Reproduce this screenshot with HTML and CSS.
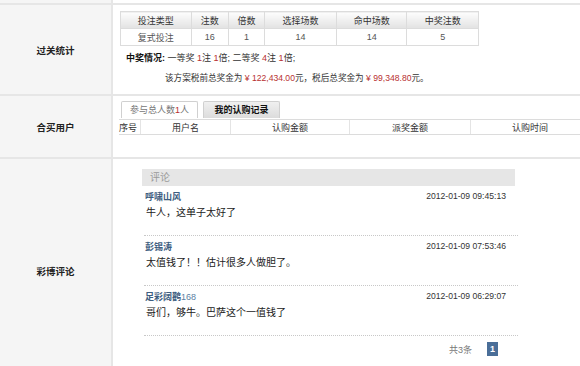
FILE: index.html
```html
<!DOCTYPE html>
<html lang="zh-CN">
  <head>
    <meta charset="UTF-8" />
    <meta name="viewport" content="width=device-width, initial-scale=1.0" />
    <title>方案详情</title>
    <link rel="stylesheet" href="styles.css">
  </head>
  <body>
    <div class="detail">
      <div class="row row-top">
        <div class="label"></div>
        <div class="content"></div>
      </div>

      <div class="row row-stats">
        <div class="label">过关统计</div>
        <div class="content">
          <table class="stats">
            <tr>
              <th class="c-type">投注类型</th>
              <th class="c-num">注数</th>
              <th class="c-mul">倍数</th>
              <th class="c-sel">选择场数</th>
              <th class="c-hit">命中场数</th>
              <th class="c-win">中奖注数</th>
            </tr>
            <tr>
              <td>复式投注</td>
              <td>16</td>
              <td>1</td>
              <td>14</td>
              <td class="red">14</td>
              <td class="red">5</td>
            </tr>
          </table>
          <p class="prize-info">
            <b>中奖情况:</b> 一等奖 <span class="red">1</span>注 <span class="red">1</span>倍; 二等奖 <span class="red">4</span>注 <span class="red">1</span>倍;
          </p>
          <p class="prize-total">
            该方案税前总奖金为 <span class="money">¥ 122,434.00</span>元，税后总奖金为 <span class="money">¥ 99,348.80</span>元。
          </p>
        </div>
      </div>

      <div class="row row-users">
        <div class="label">合买用户</div>
        <div class="content">
          <div class="tabs">
            <span class="tab">参与总人数<span class="red">1</span>人</span>
            <span class="tab active">我的认购记录</span>
          </div>
          <table class="buyers">
            <tr>
              <th class="b-no">序号</th>
              <th class="b-user">用户名</th>
              <th class="b-amount">认购金额</th>
              <th class="b-prize">派奖金额</th>
              <th class="b-time">认购时间</th>
            </tr>
          </table>
        </div>
      </div>

      <div class="row row-comments">
        <div class="label">彩博评论</div>
        <div class="content">
          <div class="comments">
            <div class="comments-head">评论</div>
            <ul class="comment-list">
              <li class="comment">
                <div class="comment-meta">
                  <span class="author">呼啸山风</span>
                  <span class="time">2012-01-09 09:45:13</span>
                </div>
                <p class="comment-text">牛人，这单子太好了</p>
              </li>
              <li class="comment">
                <div class="comment-meta">
                  <span class="author">彭锡涛</span>
                  <span class="time">2012-01-09 07:53:46</span>
                </div>
                <p class="comment-text">太值钱了！！估计很多人做胆了。</p>
              </li>
              <li class="comment">
                <div class="comment-meta">
                  <span class="author">足彩阔鹳<span class="digits">168</span></span>
                  <span class="time">2012-01-09 06:29:07</span>
                </div>
                <p class="comment-text">哥们，够牛。巴萨这个一值钱了</p>
              </li>
            </ul>
            <div class="pager">
              <span class="total">共3条</span>
              <span class="page current">1</span>
            </div>
          </div>
        </div>
      </div>
    </div>
  </body>
</html>
```

FILE: styles.css
```css
body {
  margin: 0;
  font-family: "Liberation Sans", "Noto Sans CJK SC", sans-serif;
  font-size: 9px;
  color: #333;
  background-color: #fff;
  height: 366px;
  overflow: hidden;
}

p {
  margin: 0;
}

.red {
  color: #b83030;
}

.row {
  display: grid;
  grid-template-columns: 113px 1fr;
  border-bottom: 2px solid #e6e6e6;
}

.label {
  background-color: #f5f5f5;
  border-right: 2px solid #e6e6e6;
  display: flex;
  align-items: center;
  justify-content: center;
  font-weight: 700;
  font-size: 9.5px;
  color: #222;
}

.row-top {
  height: 3px;
}

.row-stats {
  height: 89px;
}

.row-users {
  height: 61px;
}

.row-comments {
  height: 207px;
  border-bottom: none;
  overflow: hidden;
}

/* 过关统计 */
.row-stats .content {
  padding: 6px 0 0 7px;
}

.stats {
  border-collapse: collapse;
  width: 359px;
  border: 1px solid #d4d4d4;
  text-align: center;
}

.stats th,
.stats td {
  height: 16px;
  padding: 0;
  border: 1px solid #dcdcdc;
  font-weight: 400;
}

.stats th {
  background: linear-gradient(#fdfdfd, #e2e2e2);
  color: #333;
}

.stats td {
  background-color: #fff;
  color: #555;
}

.c-type { width: 71px; }
.c-num { width: 37px; }
.c-mul { width: 36px; }
.c-sel { width: 72px; }
.c-hit { width: 71px; }
.c-win { width: 72px; }

.prize-info {
  margin-top: 5px;
  padding-left: 6px;
  line-height: 14px;
  color: #333;
}

.prize-info b {
  color: #111;
}

.prize-total {
  margin-top: 6px;
  padding-left: 45px;
  line-height: 14px;
  font-size: 8.6px;
  color: #333;
}

.money {
  color: #b83030;
}

/* 合买用户 */
.row-users .content {
  padding: 5px 0 0 6px;
  overflow: hidden;
}

.tabs {
  display: flex;
  gap: 5px;
  padding-left: 2px;
  height: 18px;
}

.tab {
  width: 75px;
  height: 16px;
  line-height: 16px;
  text-align: center;
  border: 1px solid #d0d0d0;
  border-bottom: none;
  border-radius: 2px 2px 0 0;
  color: #777;
  background-color: #fff;
}

.tab.active {
  background: linear-gradient(#f0f0f0, #dcdcdc);
  color: #111;
  font-weight: 700;
}

.buyers {
  border-collapse: collapse;
  width: 470px;
}

.buyers th {
  height: 14px;
  padding: 0;
  font-weight: 400;
  color: #333;
  border-top: 1px solid #dcdcdc;
  border-bottom: 1px solid #dcdcdc;
  border-left: 1px solid #e4e4e4;
  text-align: center;
}

.buyers th:first-child {
  border-left: none;
  text-align: left;
}

.b-no { width: 21px; }
.b-user { width: 90px; }
.b-amount { width: 119px; }
.b-prize { width: 121px; }
.b-time { width: 119px; }

/* 彩博评论 */
.row-comments .label {
  align-items: flex-start;
  padding-top: 105px;
}

.row-comments .content {
  padding: 10px 0 0 29px;
}

.comments {
  width: 376px;
}

.comments-head {
  width: 365px;
  height: 17px;
  line-height: 17px;
  padding-left: 8px;
  background-color: #e6e6e6;
  color: #9a9a9a;
  font-size: 10px;
}

.comment-list {
  list-style: none;
  margin: 0 0 0 2px;
  padding: 0;
}

.comment {
  height: 46px;
  padding-top: 3px;
  border-bottom: 1px dotted #c8c8c8;
}

.comment-meta {
  display: flex;
  justify-content: space-between;
  align-items: center;
  height: 14px;
  padding: 0 12px 0 1px;
}

.author {
  font-weight: 700;
  color: #3d5d80;
}

.digits {
  font-weight: 400;
  color: #5b7fa3;
}

.time {
  font-size: 8.6px;
  color: #333;
}

.comment-text {
  margin-top: 3px;
  padding-left: 2px;
  line-height: 14px;
  font-size: 10px;
  color: #222;
}

.pager {
  display: flex;
  justify-content: flex-end;
  align-items: center;
  gap: 15px;
  margin-top: 6px;
  padding-right: 20px;
}

.total {
  color: #777;
}

.page {
  width: 11px;
  height: 14px;
  line-height: 14px;
  text-align: center;
  font-weight: 700;
}

.page.current {
  background-color: #4a6e98;
  color: #fff;
}
```
